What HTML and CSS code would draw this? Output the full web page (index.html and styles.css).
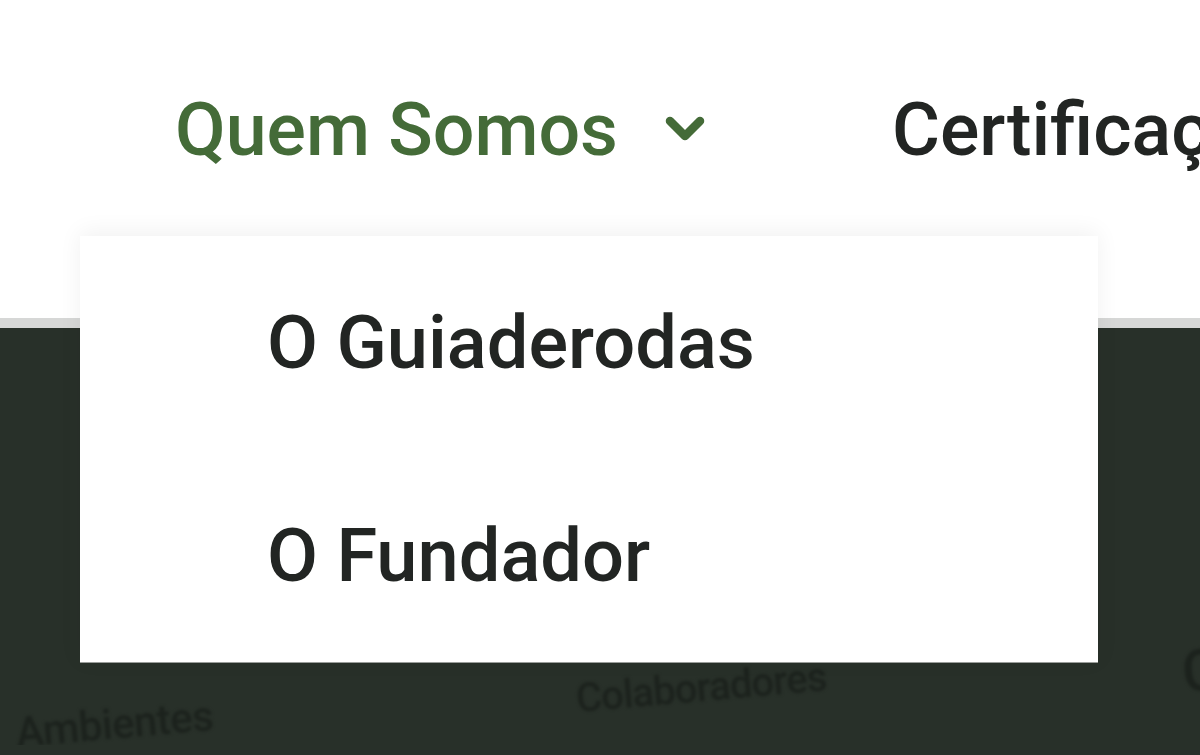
FILE: index.html
```html
<!DOCTYPE html>
<html lang="pt-BR">

<head>
    <meta charset="UTF-8">
    <meta name="viewport" content="width=device-width, initial-scale=1.0">
    <title>Guiaderodas - Quem Somos</title>
    <link rel="stylesheet" href="styles.css">
</head>

<body>

    <header class="topo">
        <nav class="menu">
            <div class="menu-item ativo">
                <span>Quem Somos</span>
                <svg class="seta" width="40" height="28" viewBox="0 0 40 28">
                    <polyline points="5,6 20,21 35,6" fill="none" stroke="#446b38" stroke-width="8.5" stroke-linecap="round" stroke-linejoin="round" />
                </svg>
            </div>
            <div class="menu-item">Certificações</div>
        </nav>
    </header>

    <div class="faixa"></div>

    <main class="fundo">
        <div class="cartoes">
            <span class="cartao ambientes">Ambientes</span>
            <span class="cartao colaboradores">Colaboradores</span>
            <span class="cartao outro">C</span>
        </div>
    </main>

    <ul class="submenu">
        <li>O Guiaderodas</li>
        <li>O Fundador</li>
    </ul>

</body>

</html>
```

FILE: styles.css
```css
body {
    margin: 0;
    width: 1200px;
    height: 755px;
    overflow: hidden;
    font-family: Roboto, "Liberation Sans", sans-serif;
    background-color: #283029;
}

.topo {
    height: 318px;
    background-color: #fff;
}

.menu {
    display: flex;
    padding-top: 87px;
    padding-left: 175px;
    gap: 187px;
    white-space: nowrap;
}

.menu-item {
    display: flex;
    align-items: flex-start;
    font-size: 73.5px;
    font-weight: 500;
    color: #222523;
}

.menu-item.ativo {
    color: #446b38;
}

.seta {
    margin-left: 47px;
    margin-top: 28px;
}

.faixa {
    height: 10px;
    background-color: #d6d7d6;
}

.fundo {
    height: 417px;
    background-color: #283029;
    overflow: hidden;
}

.cartoes {
    display: flex;
    align-items: flex-start;
    padding-left: 18px;
    color: #1c221d;
    font-weight: 500;
    filter: blur(1.4px);
}

.cartao {
    display: block;
    flex: none;
    white-space: nowrap;
    transform: rotate(-5deg);
    transform-origin: left bottom;
}

.ambientes {
    width: 560px;
    margin-top: 380px;
    font-size: 42px;
    letter-spacing: -0.5px;
}

.colaboradores {
    width: 607px;
    margin-top: 347px;
    font-size: 40px;
    letter-spacing: -0.8px;
}

.outro {
    margin-top: 310px;
    font-size: 58px;
}

.submenu {
    position: absolute;
    top: 236px;
    left: 80px;
    width: 1018px;
    margin: 0;
    padding: 0;
    list-style: none;
    background-color: #fff;
    border-bottom: 1px solid #9a9d9a;
    box-shadow: 0 -4px 22px rgba(0, 0, 0, 0.06);
}

.submenu li {
    padding-left: 187px;
    height: 213px;
    line-height: 213px;
    font-size: 74px;
    font-weight: 500;
    color: #222523;
}
```
